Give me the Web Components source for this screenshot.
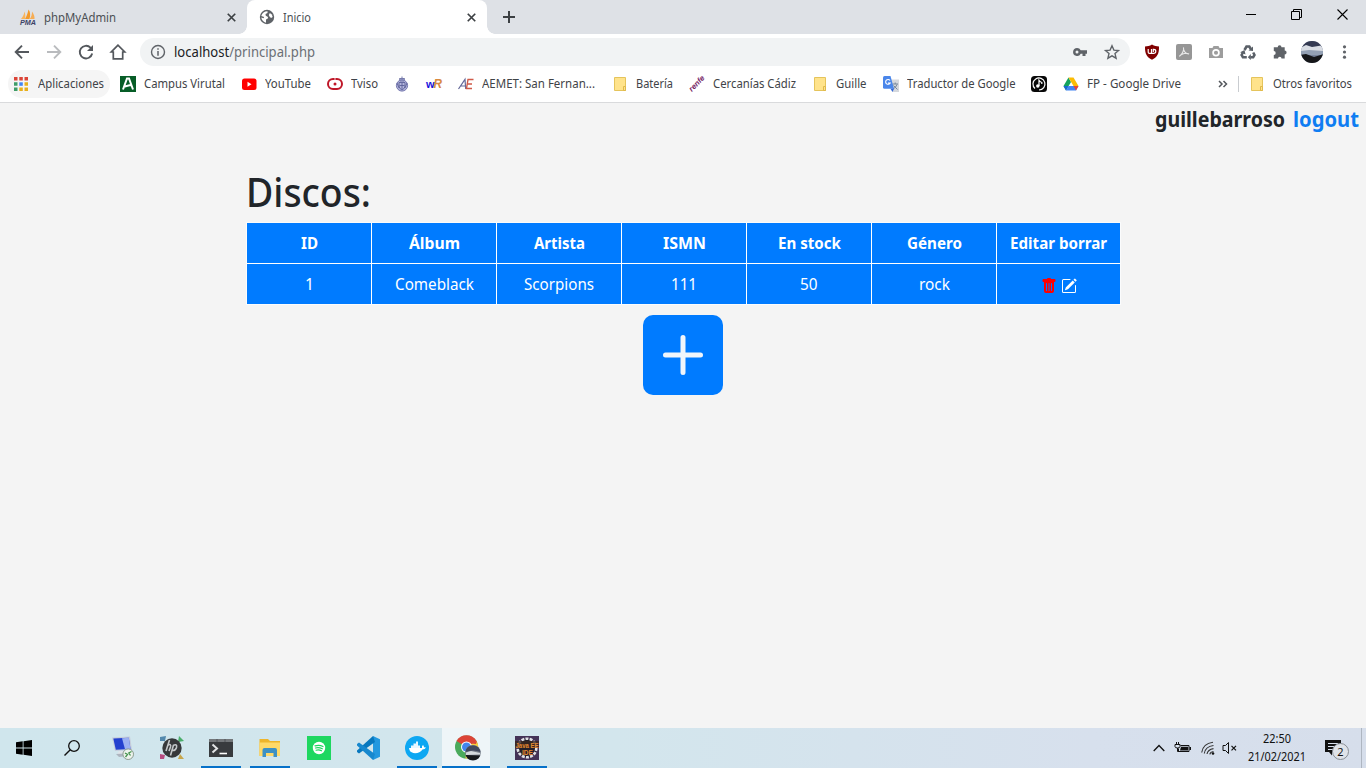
<!DOCTYPE html>
<html lang="es">
<head>
<meta charset="utf-8">
<title>Inicio</title>
<style>
html,body{margin:0;height:100%;overflow:hidden}
body{font-family:"Noto Sans","Open Sans",sans-serif;background:#f4f4f4}
</style>
</head>
<body>
<desktop-screen></desktop-screen>
<script>
const define = (name, html, init) => customElements.define(name, class extends HTMLElement {
  connectedCallback() {
    if (this.shadowRoot) return;
    this.attachShadow({mode: 'open'}).innerHTML = typeof html === 'function' ? html(this) : html;
    if (init) init(this);
  }
});

/* Icon set: name -> [viewBox, markup] */
const icons = {
  pma: ['0 0 16 16', '<path d="M1 10C3 8 4 5 4.600 2.500C5.500 5 5.500 8 5 10Z" fill="#f9b45c"/><path d="M5 10C7 7 8 3 8.500.5C10.500 3 10.500 7 9.500 10Z" fill="#f39a2b"/><path d="M9.800 10C11.500 8 12 5 12 2.500C14 5 14.800 8 14.500 10Z" fill="#f6ad55"/><text x="0" y="15.800" font-size="6.300" font-weight="700" font-style="italic" textLength="16" lengthAdjust="spacingAndGlyphs" font-family="Liberation Sans" fill="#3c4266">PMA</text>'],
  globe: ['0 0 16 16', '<circle cx="8" cy="8" r="7.200" fill="#5f6368"/><path d="M2.300 7C3 4 5.500 2.200 8.500 2.200L8.500 4L6.500 5L6.800 6.800L9 8L8.800 9.500L7 10.500L7 13.800C4.500 13.200 2.500 11 2.300 8.500L4.500 9.300L5.200 8Z" fill="#fff"/><path d="M10.800 4L12.800 5.500L13.700 8L12 9L10.500 7.500L9.800 6Z" fill="#fff"/>'],
  close: ['0 0 16 16', '<path d="M4 4L12 12M12 4L4 12" stroke="#3c4043" stroke-width="1.800" fill="none"/>'],
  plus: ['0 0 16 16', '<path d="M8 2V14M2 8H14" stroke="#3c4043" stroke-width="2"/>'],
  min: ['0 0 10 10', '<path d="M0 5.500H10" stroke="#000"/>'],
  restore: ['0 0 11 11', '<path d="M.5 2.500H8.500V10.500H.5ZM2.500 2.500V.5H10.500V8.500H8.500" fill="none" stroke="#000"/>'],
  wclose: ['0 0 11 11', '<path d="M.5.5L10.500 10.500M10.500.5L.5 10.500" fill="none" stroke="#000" stroke-width="1.100"/>'],
  back: ['0 0 16 16', '<path d="M15 8H2M8 1.700L1.700 8L8 14.300" fill="none" stroke="#54585d" stroke-width="1.900"/>'],
  fwd: ['0 0 16 16', '<path d="M1 8H14M8 1.700L14.300 8L8 14.300" fill="none" stroke="#b9bbbe" stroke-width="1.900"/>'],
  reload: ['0 0 16 16', '<path d="M14.200 9.600A6.300 6.300 0 1 1 12.500 3.600L13.500 4.800" fill="none" stroke="#54585d" stroke-width="1.900"/><path d="M15 1V7H9Z" fill="#54585d"/>'],
  home: ['0 0 16 16', '<path d="M8 1.200L1.300 8H3.300V14.800H12.700V8H14.700Z" fill="none" stroke="#54585d" stroke-width="1.700"/>'],
  info: ['0 0 16 16', '<circle cx="8" cy="8" r="6.500" fill="none" stroke="#5f6368" stroke-width="1.400"/><path d="M8 7V11.700M8 4.300V5.800" stroke="#5f6368" stroke-width="1.500"/>'],
  key: ['0 0 16 16', '<path d="M5 4A4 4 0 1 0 8.700 9.700H10.500V12H13.500V9.700H15V6.300H8.700A4 4 0 0 0 5 4ZM5 6.500A1.500 1.500 0 1 1 5 9.500A1.500 1.500 0 0 1 5 6.500Z" fill="#5f6368" fill-rule="evenodd"/>'],
  star: ['0 0 16 16', '<path d="M8 1.800L9.900 6.100L14.500 6.500L11 9.600L12.100 14.200L8 11.800L3.900 14.200L5 9.600L1.500 6.500L6.100 6.100Z" fill="none" stroke="#5f6368" stroke-width="1.400"/>'],
  ublock: ['0 0 16 16', '<path d="M8 .5C10.500 2.200 12.500 2.300 15 2.500C15.200 10 13 13.500 8 15.800C3 13.500.8 10 1 2.500C3.500 2.300 5.500 2.200 8 .5Z" fill="#800000"/><path d="M4.200 5V8.200Q4.200 9.300 5.500 9.300H7.500V5M7.500 9.300H9.500Q11.800 9.300 11.800 7.200Q11.800 5.300 9.800 5.300H9.300V8" stroke="#fff" fill="none" stroke-width="1.200"/>'],
  acrobat: ['0 0 16 16', '<rect width="16" height="16" rx="2" fill="#969696"/><path d="M3.300 12.300C6 11 8.300 6 7.500 3.500C7 6.500 9.500 9.800 13 10C10.500 8.600 6 9.500 3.300 12.300Z" fill="none" stroke="#e8e8e8" stroke-width="1.100"/>'],
  camera: ['0 0 16 16', '<path d="M1 4H4.500L5.500 2H10.500L11.500 4H15V14H1Z" fill="#9d9d9d"/><circle cx="8" cy="8.700" r="2.900" stroke="#fff" stroke-width="1.700" fill="#9d9d9d"/>'],
  recycle: ['0 0 16 16', '<path d="M4.500 6L6.500 2.500H9.300L10.800 5" stroke="#5a6068" stroke-width="2.600" fill="none"/><path d="M8.500 6.500L13 7L13 2.500Z" fill="#5a6068"/><path d="M13.200 8.500L14.500 11L13.200 13.200H10.500" stroke="#5a6068" stroke-width="2.500" fill="none"/><path d="M10.800 10V16L7.800 13.200Z" fill="#5a6068"/><path d="M6.800 13.200H2.900L1.600 11L3 8.500" stroke="#5a6068" stroke-width="2.500" fill="none"/><path d="M.2 8.300L4.500 6L5.500 10.500Z" fill="#5a6068"/>'],
  puzzle: ['0 0 16 16', '<path d="M5.700 3.200A1.900 1.900 0 0 1 9.500 3.200H12.700V6.600A1.900 1.900 0 0 1 12.700 10.400V14.500H9.500A1.700 1.700 0 0 0 6 14.500H1.800V10.900A1.900 1.900 0 0 0 1.800 7.100V3.200Z" fill="#5f6368"/>'],
  avatar: ['0 0 24 24', '<defs><clipPath id="c"><circle cx="12" cy="12" r="11"/></clipPath></defs><g clip-path="url(#c)"><path d="M0 0H24V24H0Z" fill="#76829a"/><path d="M0 0H24V7H0Z" fill="#343a52"/><path d="M0 8L6 5L12 7L24 5V11H0Z" fill="#d9dde4"/><path d="M0 11L9 10L24 11V15H0Z" fill="#93a0b4"/><path d="M0 15L6 14L14 17L24 14V24H0Z" fill="#151619"/></g>'],
  dots: ['0 0 16 16', '<g fill="#5f6368"><circle cx="8.500" cy="2.800" r="1.600"/><circle cx="8.500" cy="8" r="1.600"/><circle cx="8.500" cy="13.200" r="1.600"/></g>'],
  apps: ['0 0 16 16', '<path d="M1 1h3.500v3.500H1zM6.300 1h3.500v3.500H6.300zM11.500 1H15v3.500h-3.500z" fill="#db4437"/><path d="M1 6.300h3.500v3.500H1zM1 11.500h3.500V15H1z" fill="#3f9d68"/><path d="M6.300 6.300h3.500v3.500H6.300z" fill="#4285f4"/><path d="M11.500 6.300H15v3.500h-3.500zM11.500 11.500H15V15h-3.500zM6.300 11.500h3.500V15H6.300z" fill="#e8b01c"/>'],
  campus: ['0 0 16 16', '<rect width="16" height="16" fill="#075d27"/><path d="M3 13.500L7 2.500H9L13 13.500M4.800 10.500L10.500 9" fill="none" stroke="#fff" stroke-width="2"/>'],
  yt: ['0 0 16 16', '<rect x="1" y="2.500" width="14.500" height="11.500" rx="2.500" fill="#f00"/><path d="M6.500 5.700L10.500 8.200L6.500 10.700Z" fill="#fff"/>'],
  tviso: ['0 0 16 16', '<rect x="1" y="3" width="14" height="10" rx="5" fill="none" stroke="#bf1728" stroke-width="2"/><circle cx="8" cy="8" r="1.500" fill="#bf1728"/><path d="M8 2V5" stroke="#fff" stroke-width=".8"/>'],
  crest: ['0 0 16 16', '<circle cx="8" cy="9.500" r="5.600" fill="#b4b6dc" stroke="#7477af"/><path d="M8 .5V4M5.500 2.500H10.500L10 5H6Z" stroke="#767aab" fill="#9397c5"/><path d="M5 6.500H11V10Q11 12.500 8 14Q5 12.500 5 10ZM8 7V13M5.500 9.500H10.500M3 7L5 12M13 7L11 12" fill="none" stroke="#5c6199" stroke-width=".9"/>'],
  wr: ['0 0 16 16', '<text x="0" y="12" font-size="11" font-weight="700" font-family="Liberation Sans" fill="#1712dc" textLength="8.500" lengthAdjust="spacingAndGlyphs">w</text><text x="7.500" y="12.300" font-size="12" font-weight="700" font-style="italic" font-family="Liberation Sans" fill="#d98a3f" textLength="8.500" lengthAdjust="spacingAndGlyphs">R</text>'],
  ae: ['0 0 16 16', '<path d="M.5 13L7 3.300L7.700 13M3 10H7.500" fill="none" stroke="#65699a" stroke-width="1.200"/><path d="M15.500 3.500H10L8.500 12.500H14M9.500 8H14" fill="none" stroke="#cf5a48" stroke-width="1.400"/>'],
  folder: ['0 0 16 16', '<path d="M2.500 1.500H13.500V14.500H2.500Z" fill="#ffe38b" stroke="#e5c45c"/><path d="M11.500 14.500V10.500H13.500V14.500Z" fill="#ffe38b" stroke="#e0b94b"/>'],
  renfe: ['0 0 16 16', '<text transform="translate(2.800 16) rotate(-46)" x="0" y="0" font-size="7.500" font-weight="700" font-style="italic" font-family="Liberation Sans" fill="#742365" textLength="19" lengthAdjust="spacingAndGlyphs">renfe</text>'],
  translate: ['0 0 16 16', '<path d="M7 3.500H16V16H9.500Z" fill="#d5d8dd"/><path d="M9.500 8H15M12.200 6.500V8M14 8.500Q13 11.500 10 13M10.500 9.500L14.500 13.500" stroke="#77879a" fill="none"/><path d="M1.500 0H7.500L11 12.700H1.500Q0 12.700 0 11.500V1.500Q0 0 1.500 0Z" fill="#4a86ea"/><path d="M7.500 12.700H11L9.500 16Z" fill="#3367d6"/><path d="M7 4.500A2.400 2.400 0 1 0 7.200 7H5" stroke="#fff" fill="none" stroke-width="1.100"/>'],
  music: ['0 0 16 16', '<rect width="16" height="16" rx="3.500" fill="#080808"/><path d="M4 12.500A6 6 0 1 1 8 14" stroke="#fff" fill="none" stroke-width="1.200"/><circle cx="6.800" cy="10" r="1.700" fill="#fff"/><path d="M8 10V4.300Q9 6 10.800 6.500V8" stroke="#fff" fill="none" stroke-width="1.200"/>'],
  drive: ['0 0 16 16', '<path d="M5.500 1.500L.5 10L3 14.500L8 6Z" fill="#14a35d"/><path d="M5.500 1.500H10.500L15.500 10H10.500Z" fill="#fbbc04"/><path d="M.5 10H5.500L3 14.500Z" fill="#1967d2"/><path d="M5.500 10H15.500L13 14.500H3Z" fill="#4285f4"/><path d="M10.500 10H15.500L13 14.500Z" fill="#ea4335"/>'],
  more: ['0 0 10 8', '<path d="M1 1L4 4L1 7M5.500 1L8.500 4L5.500 7" fill="none" stroke="#54585d" stroke-width="1.500"/>'],
  trash: ['0 0 16 16', '<path d="M2.500 1a1 1 0 0 0-1 1v1a1 1 0 0 0 1 1H3v9a2 2 0 0 0 2 2h6a2 2 0 0 0 2-2V4h.5a1 1 0 0 0 1-1V2a1 1 0 0 0-1-1H10a1 1 0 0 0-1-1H7a1 1 0 0 0-1 1H2.500zm3 4a.5.5 0 0 1 .5.5v7a.5.5 0 0 1-1 0v-7a.5.5 0 0 1 .5-.5zM8 5a.5.5 0 0 1 .5.5v7a.5.5 0 0 1-1 0v-7A.5.5 0 0 1 8 5zm3 .5v7a.5.5 0 0 1-1 0v-7a.5.5 0 0 1 1 0z" fill="#f00"/>'],
  edit: ['0 0 16 16', '<path d="M15.500 1.940a.5.5 0 0 1 0 .706L14.459 3.690l-2-2L13.502.646a.5.5 0 0 1 .707 0l1.293 1.293zm-1.750 2.456l-2-2L4.939 9.210a.5.5 0 0 0-.121.196l-.805 2.414a.25.25 0 0 0 .316.316l2.414-.805a.5.5 0 0 0 .196-.12l6.813-6.814zM1 13.500A1.500 1.500 0 0 0 2.500 15h11a1.500 1.500 0 0 0 1.500-1.500v-6a.5.5 0 0 0-1 0v6a.5.5 0 0 1-.5.5h-11a.5.5 0 0 1-.5-.5v-11a.5.5 0 0 1 .5-.5H9a.5.5 0 0 0 0-1H2.500A1.500 1.500 0 0 0 1 2.500v11z" fill="#fff" fill-rule="evenodd"/>'],
  add: ['0 0 16 16', '<rect width="16" height="16" rx="2" fill="#007bff"/><path d="M8 4.500V11.500M4.500 8H11.500" stroke="#f0f5fb" stroke-linecap="round"/>'],
  win: ['0 0 16 16', '<path d="M0 2.200L6.700 1.300V7.600H0ZM7.500 1.200L16 0V7.600H7.500ZM0 8.400H6.700V14.700L0 13.800ZM7.500 8.400H16V16L7.500 14.800Z" fill="#000"/>'],
  search: ['0 0 16 16', '<circle cx="10" cy="6" r="5.300" fill="none" stroke="#111" stroke-width="1.300"/><path d="M6.300 9.800L.5 15.500" stroke="#111" stroke-width="1.400"/>'],
  remote: ['0 0 24 24', '<path d="M1 1.500L19 .5L21 14L4 15Z" fill="#c5ccdb"/><path d="M2.300 2.500L17.800 1.800L19.500 13L4.800 13.800Z" fill="#2340cf"/><path d="M11 2.200L17.800 1.800L19.500 13L14 13.300Z" fill="#9bb0f2"/><path d="M8 15H14L15 19H6Z" fill="#dfe3e9"/><path d="M5 18L15 17.500L17 20L8 21Z" fill="#adb5bf"/><circle cx="17.200" cy="18.200" r="5.300" fill="#edf3ec" stroke="#8c9c90"/><path d="M14 17L16.500 18.500L14.500 21M20.500 15.500L17.800 17L19.500 19.500" fill="none" stroke="#44934c" stroke-width="1.300"/>'],
  hp: ['0 0 24 24', '<path d="M0 1L6 0L5 5L0 5Z" fill="#5389ad"/><path d="M19 0L24 5L18 6Z" fill="#4aad6b"/><path d="M0 18L5 19L4 23L0 23Z" fill="#b74b80"/><path d="M18 23L20 18L24 23Z" fill="#c7a64c"/><circle cx="12" cy="12" r="9.700" fill="#36383a"/><path d="M9.500 4L6 15M7.500 9.500Q11.500 7 10.500 11L9 15M13.500 9L10.500 19.500M13 9.500Q17.500 7.500 16.500 11.500Q15.500 15 12 14.500" fill="none" stroke="#c3c7c9" stroke-width="1.600"/>'],
  terminal: ['0 0 24 24', '<rect y="3" width="24" height="18" fill="#383b3e"/><path d="M0 3H24V6H0Z" fill="#73777a"/><path d="M8 3V6M16 3V6" stroke="#515558"/><path d="M3.500 8.500L8 12.500L3.500 16.500" stroke="#e2e4e5" stroke-width="2" fill="none"/><path d="M10.500 17.500H18" stroke="#fff" stroke-width="1.600"/>'],
  explorer: ['0 0 24 24', '<path d="M1.500 3H10L12 5H22V20H1.500Z" fill="#eeb52b"/><path d="M1.500 6.500H22V20H1.500Z" fill="#ffd968"/><path d="M4.500 14Q4.500 12 6.500 12H17Q19 12 19 14V21H15.500V17H8V21H4.500Z" fill="#3d91c4"/>'],
  spotify: ['0 0 24 24', '<rect width="24" height="24" fill="#1ed760"/><circle cx="12" cy="12" r="6.200" fill="#fff"/><path d="M8 9.800Q12.500 8.500 16 10.500M8.500 12Q12 11 15.300 12.800M9 14.200Q12 13.300 14.500 14.800" fill="none" stroke="#1ed760" stroke-linecap="round" stroke-width="1.200"/>'],
  vscode: ['0 0 24 24', '<path d="M17 0L24 3.300V20.700L17 24Z" fill="#2398df"/><path d="M17 0L1 14.500V16L3 17.500L19 6Z" fill="#0878be"/><path d="M17 24L1 9.500V8L3 6.500L19 18Z" fill="#1788ce"/>'],
  docker: ['0 0 24 24', '<circle cx="12" cy="12" r="12" fill="#0da7f2"/><path d="M4 12H17Q16.500 10 18 9Q19 10 19 11.200L21 11.500Q20 13.500 17.500 13.500C15 18 6 18.500 4.500 14Z" fill="#fff"/><path d="M6 9.500H15V12H6ZM8.500 7.500H13V10H8.500ZM11 5.500H13V8H11Z" fill="#e6f7ff"/>'],
  chrome: ['0 0 26 26', '<circle cx="11.500" cy="12" r="11.500" fill="#4aaa5c"/><path d="M11.500 12L1.500 6A11.500 11.500 0 0 1 21.500 6Z" fill="#dc4437"/><path d="M11.500 12L21.500 6A11.500 11.500 0 0 1 10.500 23.500Z" fill="#f8cc3e"/><path d="M12 6.200H22L21 9L12 8Z" fill="#dc4437"/><circle cx="11.500" cy="12" r="5.500" fill="#fff"/><circle cx="11.500" cy="12" r="4.500" fill="#4385ee"/><circle cx="18" cy="17.800" r="7.800" fill="#767d88"/><path d="M10.500 17Q18 14 25.500 17A7.800 7.800 0 0 0 11 14.500Z" fill="#42495e"/><path d="M11 17.500L16 16L25 18V19.500L11 20Z" fill="#d5dadd"/><path d="M10.600 20L25.200 20.500A7.800 7.800 0 0 1 10.600 20Z" fill="#17191c"/>'],
  java: ['0 0 24 24', '<rect width="24" height="24" fill="#443357"/><circle cx="12" cy="12" r="9.300" fill="#241f29" stroke="#e0e0e4" stroke-width="2.600" stroke-dasharray="3 1.200"/><path d="M0 5H24V12H0Z" fill="#38251f" opacity=".8"/><svg x="0" y="3" width="24" height="18" viewBox="0 0 24 18"><text x=".5" y="8.500" font-family="Liberation Sans" font-size="8" font-weight="700" fill="#e58a30" textLength="23" lengthAdjust="spacingAndGlyphs">Java EE</text><text x="7" y="15.500" font-family="Liberation Sans" font-size="8" font-weight="700" fill="#e58a30" textLength="11" lengthAdjust="spacingAndGlyphs">IDE</text></svg>'],
  chevron: ['0 0 12 8', '<path d="M.7 7L6 1.500L11.300 7" fill="none" stroke="#111" stroke-width="1.300"/>'],
  battery: ['0 0 16 12', '<path d="M5.500 3.500H14V9.500H3.500V6.500" fill="none" stroke="#111"/><path d="M6 4.700H13V8.500H5ZM14.500 5H16V8H14.500Z" fill="#111"/><path d="M0 2.500H5V4.500Q5 6 2.500 6Q0 6 0 4.500ZM1.500 0V3M3.500 0V3M2.500 6V9.500H4" stroke="#111" fill="none"/>'],
  wifi: ['0 0 14 14', '<g fill="none" stroke="#333" stroke-width="1.100"><path d="M.7 11.500Q2 2.500 12 1.200M3.300 12.500Q4.300 5.500 12.500 4.500M6 13Q6.800 8.500 12.500 7.600M8.800 13.300Q9.300 11 12.500 10.500"/></g><circle cx="12" cy="12.500" r="1.300" fill="#111"/>'],
  mute: ['0 0 16 14', '<path d="M1 4.500H3.500L6.500 1.500V12.500L3.500 9.500H1Z" fill="none" stroke="#111"/><path d="M9.500 4.800L14 9.300M14 4.800L9.500 9.300" stroke="#111" stroke-width="1.200"/>'],
  note: ['0 0 17 16', '<path d="M0 0H16V12H7V15.500L4 12H0Z" fill="#111"/><path d="M3 3.500H13M3 6.500H13M3 9.500H10" stroke="#d7dfec" stroke-width="1"/>']
};
define('ui-icon', el => {
  const [box, art] = icons[el.getAttribute('name')];
  const w = el.getAttribute('w') || 16, h = el.getAttribute('h') || w;
  return `<style>:host{display:block;flex:none;width:${w}px;height:${h}px}svg{display:block;overflow:visible}</style><svg width="${w}" height="${h}" viewBox="${box}">${art}</svg>`;
});

/* Single line of text condensed to a fixed measure */
define('fit-text', '<style>:host{display:inline-block;flex:none;white-space:nowrap}span{display:inline-block;transform-origin:0 50%}</style><span><slot></slot></span>', el => {
  const w = +el.getAttribute('w'), s = el.shadowRoot.querySelector('span');
  s.style.transform = `scaleX(${w / s.getBoundingClientRect().width})`;
  el.style.width = w + 'px';
});

define('tab-item', el => `<style>
:host{display:flex;align-items:center;box-sizing:border-box;height:34px;font-size:12px;color:#4b4f54;padding-left:20px;width:247px}
:host([active]){background:#fff;width:240px;border-radius:8px 8px 0 0;padding-left:12px;position:relative}
:host([active])::before,:host([active])::after{content:"";position:absolute;bottom:0;width:8px;height:8px}
:host([active])::before{left:-8px;background:radial-gradient(circle at 0 0,transparent 7.500px,#fff 8px)}
:host([active])::after{right:-8px;background:radial-gradient(circle at 100% 0,transparent 7.500px,#fff 8px)}
slot{display:block;margin-left:8px;flex:1}.x{margin-right:8px}
</style><ui-icon name="${el.getAttribute('icon')}"></ui-icon><slot></slot><ui-icon class="x" name="close" w="15"></ui-icon>`);

define('tab-strip', `<style>
:host{display:flex;height:34px;background:#dee1e6;align-items:center}
.new{margin-left:14px}.win{margin-left:auto;display:flex;align-items:center;height:28px;gap:35px;padding-right:18px;align-self:start}
</style>
<tab-item icon="pma"><fit-text w="72">phpMyAdmin</fit-text></tab-item>
<tab-item icon="globe" active><fit-text w="28">Inicio</fit-text></tab-item>
<ui-icon class="new" name="plus"></ui-icon>
<div class="win"><ui-icon name="min" w="10"></ui-icon><ui-icon name="restore" w="11"></ui-icon><ui-icon name="wclose" w="11"></ui-icon></div>`);

define('nav-bar', `<style>
:host{display:flex;height:36px;background:#fff;align-items:center;box-sizing:border-box;padding-left:14px}
.nav{display:flex;gap:16px}
.url{display:flex;align-items:center;box-sizing:border-box;width:990px;height:28px;border-radius:14px;background:#f1f3f4;margin-left:14px;padding:0 10px;font-size:14px;color:#6b6f74}
.url fit-text{margin:-1px 0 1px 8px}b{font-weight:400;color:#202124}
.key{margin-left:auto;margin-right:16px}
.ext{display:flex;align-items:center;gap:16px;margin-left:14px}.ext .av{margin:0 -4px}
</style>
<div class="nav"><ui-icon name="back"></ui-icon><ui-icon name="fwd"></ui-icon><ui-icon name="reload"></ui-icon><ui-icon name="home"></ui-icon></div>
<div class="url"><ui-icon name="info"></ui-icon><fit-text w="141"><b>localhost</b>/principal.php</fit-text><ui-icon class="key" name="key"></ui-icon><ui-icon name="star"></ui-icon></div>
<div class="ext"><ui-icon name="ublock"></ui-icon><ui-icon name="acrobat"></ui-icon><ui-icon name="camera"></ui-icon><ui-icon name="recycle"></ui-icon><ui-icon name="puzzle"></ui-icon><ui-icon class="av" name="avatar" w="24"></ui-icon><ui-icon name="dots"></ui-icon></div>`);

define('book-mark', el => `<style>:host{display:flex;flex:none;align-items:center;gap:8px;height:28px}slot{display:block;margin-top:-1px}</style><ui-icon name="${el.getAttribute('icon')}"></ui-icon><slot></slot>`);

define('bookmarks-bar', `<style>
:host{display:flex;box-sizing:border-box;height:33px;background:#fff;border-bottom:1px solid #d9dadc;padding-left:8px;padding-bottom:4px;align-items:center;gap:16px;font-size:12px;color:#3f4347}
.apps{background:#f5f5f5;border-radius:14px;padding:0 6px 0 5px;gap:9px;width:91px;margin-right:-6px}
.more{margin-left:21px}.sep{width:1px;height:16px;background:#c9ccd0;margin:0 -6px}
</style>
<book-mark class="apps" icon="apps"><fit-text w="66">Aplicaciones</fit-text></book-mark>
<book-mark icon="campus"><fit-text w="81">Campus Virutal</fit-text></book-mark>
<book-mark icon="yt"><fit-text w="46">YouTube</fit-text></book-mark>
<book-mark icon="tviso"><fit-text w="27">Tviso</fit-text></book-mark>
<ui-icon name="crest"></ui-icon><ui-icon name="wr"></ui-icon>
<book-mark icon="ae"><fit-text w="113" style="margin-right:1px">AEMET: San Fernan...</fit-text></book-mark>
<book-mark icon="folder"><fit-text w="37">Batería</fit-text></book-mark>
<book-mark icon="renfe"><fit-text w="83">Cercanías Cádiz</fit-text></book-mark>
<book-mark icon="folder"><fit-text w="30.500">Guille</fit-text></book-mark>
<book-mark icon="translate"><fit-text w="108.500">Traductor de Google</fit-text></book-mark>
<ui-icon name="music"></ui-icon>
<book-mark icon="drive"><fit-text w="94">FP - Google Drive</fit-text></book-mark>
<ui-icon class="more" name="more" w="10" h="8"></ui-icon><div class="sep"></div>
<book-mark icon="folder"><fit-text w="79">Otros favoritos</fit-text></book-mark>`);

define('disc-table', `<style>
:host{display:grid;grid-template-columns:repeat(6,124px) 123px;gap:1px;width:873px;background:#fff;border:1px solid #fbfcfd;border-top-color:#f9fafb;color:#fff;font-size:16px;box-sizing:content-box}
div{height:40px;background:#007bff;display:flex;align-items:center;justify-content:center}
.h{font-weight:700}.a{gap:4px;padding-top:3px;height:37px}
</style>
<div class="h"><fit-text w="17">ID</fit-text></div><div class="h"><fit-text w="51">Álbum</fit-text></div><div class="h"><fit-text w="51">Artista</fit-text></div><div class="h"><fit-text w="43">ISMN</fit-text></div><div class="h"><fit-text w="63">En stock</fit-text></div><div class="h"><fit-text w="55">Género</fit-text></div><div class="h"><fit-text w="97">Editar borrar</fit-text></div>
<div><fit-text w="9">1</fit-text></div><div><fit-text w="79">Comeblack</fit-text></div><div><fit-text w="70">Scorpions</fit-text></div><div><fit-text w="26">111</fit-text></div><div><fit-text w="17.500">50</fit-text></div><div><fit-text w="31">rock</fit-text></div><div class="a"><ui-icon name="trash"></ui-icon><ui-icon name="edit"></ui-icon></div>`);

define('page-view', `<style>
:host{display:block;flex:1;background:#f4f4f4;color:#212529}
.user{display:flex;justify-content:flex-end;gap:8px;padding:0 7px 0 0;font-size:21.500px;line-height:32px;height:32px;font-weight:700}
.user .l{color:#0f7df2}
main{width:875px;margin:33px auto 0;padding-left:1px}
h1{margin:0 0 6px;font-size:39px;font-weight:500;line-height:48px;height:48px}
.add{margin:10px 0 0 397px}
</style>
<div class="user"><fit-text w="130">guillebarroso</fit-text><fit-text class="l" w="66">logout</fit-text></div>
<main><h1><fit-text w="125">Discos:</fit-text></h1><disc-table></disc-table><ui-icon class="add" name="add" w="80"></ui-icon></main>`);

define('task-item', el => `<style>
:host{display:flex;flex:none;align-items:center;justify-content:center;width:49px;height:40px;box-sizing:border-box;position:relative}
ui-icon{margin-right:1px}
:host([run])::after{content:"";position:absolute;bottom:0;left:4px;right:5px;height:2px;background:#0671c9}
:host([focus]){background:#eef5f8}:host([focus])::after{left:0;right:0}:host([focus]) ui-icon{margin:0 0 0 3px}
:host(.s) ui-icon{margin:0}
</style><ui-icon name="${el.getAttribute('icon')}" w="${el.getAttribute('size') || 24}"></ui-icon>`);

define('task-bar', `<style>
:host{display:flex;height:40px;background:linear-gradient(90deg,#d0e6ed,#d3e6ed 45%,#d7e0ed 80%,#d6deeb);align-items:center;color:#111}
.s{width:48px}.g{margin-left:3px}.focus{width:48px}.j{margin-left:13px}
.tray{display:flex;align-items:center;margin-left:auto;height:40px}
.tray>*{margin-right:10px}
.clock{display:flex;flex-direction:column;align-items:center;font-size:12px;line-height:18px;height:36px;width:60px;margin:0 18px 0 0;padding-bottom:1px}
.n{position:relative;width:26px;height:24px;margin-right:10px}.n ui-icon{margin-top:4px}
.n span{position:absolute;left:7px;top:7px;width:15px;height:15px;border:1px solid #888e95;border-radius:50%;background:#dfe3e9;font-size:11px;line-height:15px;text-align:center}
.edge{width:4px;height:40px;border-left:1px solid #aeb6c1;margin:0}
</style>
<task-item class="s" icon="win" size="16"></task-item><task-item class="s" icon="search" size="16"></task-item>
<task-item class="g" icon="remote"></task-item><task-item icon="hp"></task-item><task-item icon="terminal" run></task-item><task-item icon="explorer" run></task-item><task-item icon="spotify"></task-item><task-item icon="vscode"></task-item><task-item icon="docker" run></task-item><task-item class="focus" icon="chrome" size="26" run focus></task-item><task-item class="j" icon="java" run></task-item>
<div class="tray"><ui-icon name="chevron" w="12" h="8"></ui-icon><ui-icon name="battery" w="16" h="12"></ui-icon><ui-icon name="wifi" w="14" h="14" style="margin-right:7px"></ui-icon><ui-icon name="mute" w="16" h="14" style="margin-right:9px"></ui-icon>
<div class="clock"><fit-text w="28">22:50</fit-text><fit-text w="58">21/02/2021</fit-text></div>
<div class="n"><ui-icon name="note" w="17" h="16"></ui-icon><span>2</span></div><div class="edge"></div></div>`);

define('desktop-screen', `<style>:host{display:flex;flex-direction:column;width:1366px;height:768px}</style>
<tab-strip></tab-strip><nav-bar></nav-bar><bookmarks-bar></bookmarks-bar><page-view></page-view><task-bar></task-bar>`);
</script>
</body>
</html>
